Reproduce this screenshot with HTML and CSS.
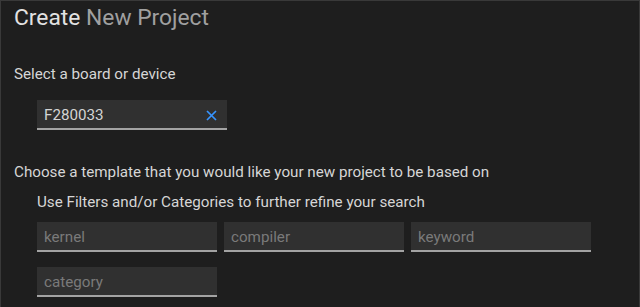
FILE: index.html
```html
<!DOCTYPE html>
<html lang="en">
<head>
    <meta charset="UTF-8">
    <title>Create New Project</title>
    <link rel="stylesheet" href="styles.css">
</head>
<body>
    <div class="wizard">
        <h1 class="wizard-title">Create <span class="wizard-title-sub">New Project</span></h1>

        <div class="wizard-label">Select a board or device</div>
        <div class="field field-device">
            <input type="text" class="field-input" value="F280033">
            <button class="field-clear" title="Clear">
                <svg width="11" height="11" viewBox="0 0 11 11">
                    <path d="M1 1 L10 10 M10 1 L1 10" stroke="#3794ff" stroke-width="1.7" fill="none"/>
                </svg>
            </button>
        </div>

        <div class="wizard-label wizard-label-template">Choose a template that you would like your new project to be based on</div>
        <div class="filters">
            <div class="wizard-label filters-hint">Use Filters and/or Categories to further refine your search</div>
            <div class="filters-grid">
                <div class="field"><input type="text" class="field-input" placeholder="kernel"></div>
                <div class="field"><input type="text" class="field-input" placeholder="compiler"></div>
                <div class="field"><input type="text" class="field-input" placeholder="keyword"></div>
                <div class="field"><input type="text" class="field-input" placeholder="category"></div>
            </div>
        </div>
    </div>
</body>
</html>
```

FILE: styles.css
```css
/* Base page: dark editor theme */
html, body {
    margin: 0;
    height: 100%;
}

body {
    font-family: Roboto, 'Liberation Sans', sans-serif;
    background-color: #1e1e1e;
    color: #d4d4d4;
    border: 1px solid #393939;
    border-bottom: none;
    box-sizing: border-box;
    overflow: hidden;
}

.wizard {
    padding: 2px 13px 0 13px;
}

/* Title */
.wizard-title {
    margin: 0;
    font-size: 22.8px;
    line-height: 30px;
    font-weight: 400;
    color: #e2e2e2;
}

.wizard-title-sub {
    color: #a0a0a0;
}

/* Labels */
.wizard-label {
    font-size: 15.2px;
    line-height: 20px;
    margin-top: 31px;
    color: #d6d6d6;
}

.wizard-label-template {
    margin-top: 32px;
}

/* Text fields */
.field {
    display: flex;
    align-items: center;
    width: 180px;
    height: 30px;
    box-sizing: border-box;
    background-color: #303030;
    border-bottom: 2px solid #a3a3a3;
}

.field-device {
    width: 190px;
    margin: 16px 0 0 23px;
}

.field-input {
    flex-grow: 1;
    min-width: 0;
    height: 28px;
    box-sizing: border-box;
    padding: 5px 7px 3px 7px;
    border: none;
    outline: none;
    background: transparent;
    color: #d4d4d4;
    font-family: Roboto, 'Liberation Sans', sans-serif;
    font-size: 15.2px;
    line-height: 20px;
}

.field-input::placeholder {
    color: #7a7a7a;
}

.field-clear {
    display: flex;
    align-items: center;
    justify-content: center;
    width: 26px;
    height: 28px;
    padding: 2px 9px 0 0;
    border: none;
    background: transparent;
    cursor: pointer;
}

/* Filter area */
.filters {
    padding-left: 23px;
}

.filters-hint {
    margin-top: 10px;
}

.filters-grid {
    display: grid;
    grid-template-columns: repeat(3, 180px);
    gap: 15px 7px;
    margin-top: 10px;
}
```
